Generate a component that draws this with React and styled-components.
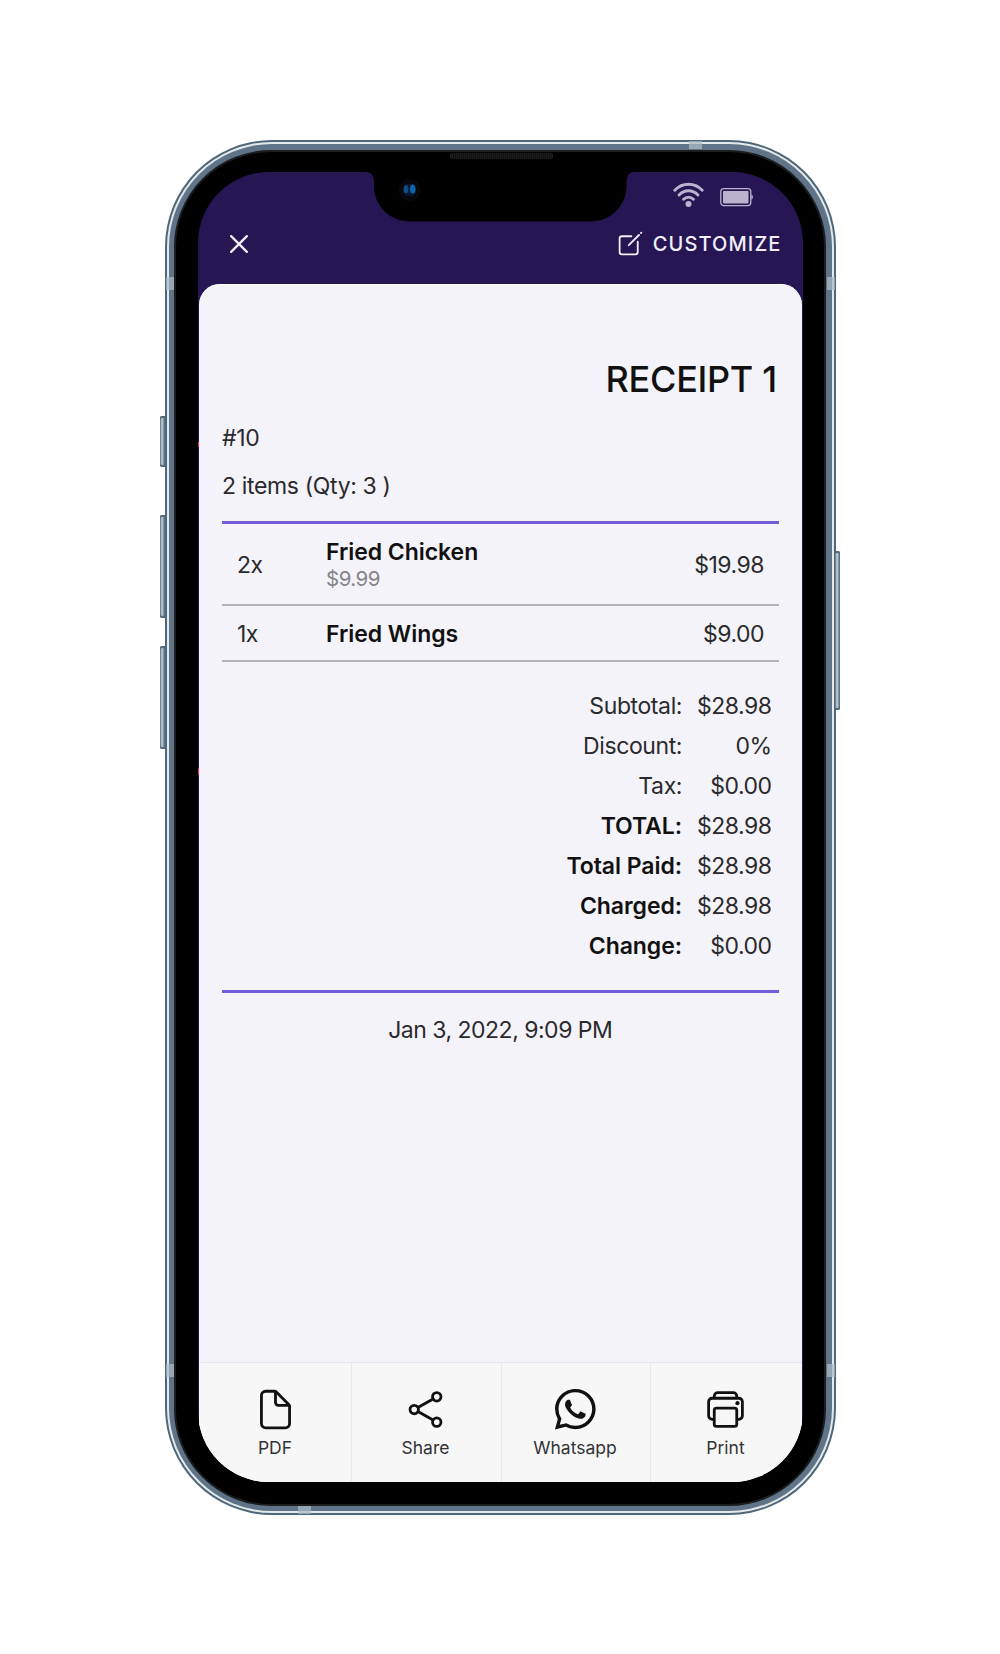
import React from "react";
import styled, { createGlobalStyle, css } from "styled-components";
import {
  IoCloseOutline,
  IoCreateOutline,
  IoDocumentOutline,
  IoShareSocialOutline,
  IoLogoWhatsapp,
  IoPrintOutline,
} from "react-icons/io5";

const Global = createGlobalStyle`
  *, *::before, *::after { box-sizing: border-box; }
  html, body { margin: 0; background: #fff; }
  body { font-family: Inter, "Liberation Sans", sans-serif; color: #2a2a2d; }
`;

const Page = styled.main`
  width: 1000px;
  height: 1654px;
  display: flex;
  justify-content: center;
  padding-top: 140px;
  background: #fff;
`;

const Phone = styled.div`
  position: relative;
  width: 671px;
  height: 1375px;
  padding: 2px;
  border-radius: 107px;
  background: #50677a;
`;

const Shine = styled.div`
  height: 100%;
  padding: 2px;
  border-radius: 105px;
  background: #e4e9ec;
`;

const Band = styled.div`
  height: 100%;
  padding: 5.5px;
  border-radius: 103px;
  background: #5f7488;
`;

const Bezel = styled.div`
  height: 100%;
  padding: 20.5px 21.5px 21.5px;
  border: 2px solid #1c1d1e;
  border-radius: 97px;
  background: #000;
`;

const Screen = styled.div`
  position: relative;
  height: 100%;
  display: flex;
  flex-direction: column;
  overflow: hidden;
  border-radius: 71px;
  background: #261754;
`;

const SideButton = styled.i`
  position: absolute;
  top: ${(p) => p.$top}px;
  height: ${(p) => p.$height}px;
  width: 5px;
  background: linear-gradient(90deg, #5d7385, #cbd4d9 40%, #8497a5 70%, #50677a);
  box-shadow: inset 0 2px 1px #50677a, inset 0 -2px 1px #50677a;
  ${(p) =>
    p.$right
      ? css`right: -4.5px; border-radius: 0 2px 2px 0;`
      : css`left: -4.5px; border-radius: 2px 0 0 2px;`}
`;

const Antenna = styled.i`
  position: absolute;
  left: ${(p) => p.$x}px;
  top: ${(p) => p.$y}px;
  width: ${(p) => (p.$flat ? 13 : 8)}px;
  height: ${(p) => (p.$flat ? 8 : 13)}px;
  background: rgba(170, 187, 197, 0.72);
`;

const EdgeMark = styled.i`
  position: absolute;
  left: 0;
  top: ${(p) => p.$top}px;
  width: 1.5px;
  height: ${(p) => p.$height}px;
  background: #f5334f;
`;

const Speaker = styled.i`
  position: absolute;
  left: 285px;
  top: 13px;
  width: 103px;
  height: 6px;
  border: 1px solid #2a2a2a;
  border-width: 0 1px;
  border-radius: 3px;
  background: repeating-linear-gradient(90deg, #111 0 1px, #1b1b1b 1px 2px);
`;

const Notch = styled.svg`
  position: absolute;
  left: 168px;
  top: 0;
`;

const StatusBar = styled.div`
  height: 48px;
  display: flex;
  justify-content: flex-end;
  padding: 10px 49.5px 0 0;
  gap: 16.5px;
`;

const TopBar = styled.header`
  height: 63.5px;
  display: flex;
  justify-content: space-between;
  padding: 5.5px 21px 0 23.5px;
  color: #f1eff7;
`;

const IconButton = styled.button`
  height: 36px;
  display: flex;
  align-items: center;
  gap: 8px;
  padding: 0;
  border: 0;
  background: none;
  color: inherit;
  font: 500 20px/36px Inter, "Liberation Sans", sans-serif;
  letter-spacing: 1.1px;
`;

const Sheet = styled.section`
  flex: 1;
  display: flex;
  flex-direction: column;
  margin: 0 1px;
  border-radius: 21px 21px 0 0;
  overflow: hidden;
  background: #f4f3f9;
  box-shadow: inset 0 1px 0 #fff;
`;

const Receipt = styled.article`
  flex: 1;
  padding: 73px 23px 0 23.5px;
  font-size: 23px;
  line-height: 28px;
  letter-spacing: -0.5px;
`;

const Title = styled.h1`
  margin: 0;
  padding-right: 1.5px;
  font-size: 36px;
  line-height: 44px;
  font-weight: 450;
  letter-spacing: -0.3px;
  text-align: right;
  color: #111;
`;

const Meta = styled.p`
  margin: ${(p) => p.$gap}px 0 0;
  letter-spacing: -0.35px;
`;

const Items = styled.ul`
  margin: 21px 0 0;
  padding: 0;
  list-style: none;
  border-top: 3px solid #745cd6;
`;

const Item = styled.li`
  height: ${(p) => p.$height}px;
  display: grid;
  grid-template-columns: 89px 1fr auto;
  align-items: center;
  padding: 0 14.5px 0 15px;
  border-bottom: 2px solid #b3b3ba;
`;

const ItemCell = styled.span`
  padding-top: 1.5px;
`;

const ItemName = styled.div`
  padding-top: ${(p) => (p.$single ? 1.5 : 0)}px;
  font-weight: 600;
  letter-spacing: -0.05px;
  color: #111;
`;

const UnitPrice = styled.div`
  font-size: 20.5px;
  line-height: 25px;
  color: #858589;
`;

const Totals = styled.dl`
  display: grid;
  grid-template-columns: 1fr auto;
  grid-auto-rows: 40.05px;
  column-gap: 15px;
  align-items: center;
  margin: 24px 0 0;
  padding: 0 7px 23.7px 0;
  text-align: right;
`;

const TotalLabel = styled.dt`
  font-weight: ${(p) => (p.$strong ? 600 : 400)};
  letter-spacing: ${(p) => (p.$strong ? -0.05 : -0.4)}px;
  color: ${(p) => (p.$strong ? "#111" : "#2a2a2d")};
`;

const TotalValue = styled.dd`
  margin: 0;
`;

const DateLine = styled.footer`
  padding-top: 22.5px;
  border-top: 3px solid #745cd6;
  text-align: center;
`;

const Actions = styled.nav`
  height: 120.5px;
  display: grid;
  grid-template-columns: 152px 150px 149px 1fr;
  border-top: 1px solid #e6e8e9;
  background: #f7f7f7;
`;

const Action = styled.button`
  display: flex;
  flex-direction: column;
  align-items: center;
  padding: 24px 1px 0 0;
  border: 0;
  border-left: 1px solid #e6e8e9;
  background: none;
  color: #111;
  &:first-child { border-left-color: transparent; padding-right: 0; }
`;

const ActionIcon = styled.span`
  width: 47px;
  height: 45px;
  display: flex;
  align-items: center;
  justify-content: center;
  svg { flex: none; }
`;

const ActionLabel = styled.span`
  margin-top: 5px;
  font: 400 17.5px/22px Inter, "Liberation Sans", sans-serif;
  color: #333335;
`;

const items = [
  { qty: "2x", name: "Fried Chicken", unit: "$9.99", price: "$19.98", height: 82 },
  { qty: "1x", name: "Fried Wings", price: "$9.00", height: 56 },
];

const totals = [
  ["Subtotal:", "$28.98"],
  ["Discount:", "0%"],
  ["Tax:", "$0.00"],
  ["TOTAL:", "$28.98", true],
  ["Total Paid:", "$28.98", true],
  ["Charged:", "$28.98", true],
  ["Change:", "$0.00", true],
];

const actions = [
  ["PDF", IoDocumentOutline, 45],
  ["Share", IoShareSocialOutline, 45],
  ["Whatsapp", IoLogoWhatsapp, 46.5],
  ["Print", IoPrintOutline, 45],
];

const antennas = [
  [524.5, 1, true],
  [133.5, 1366, true],
  [1, 137],
  [662.5, 137],
  [1, 1224],
  [662.5, 1224],
];

const Wifi = () => (
  <svg width="31" height="25" viewBox="0 0 31 25" fill="none" stroke="#b9b3ce" strokeWidth="2.9" strokeLinecap="round">
    <path d="M1.8 8.2C9.5.2 21.5.2 29.2 8.2M6.1 13C11.6 7.4 19.4 7.4 24.9 13M10.6 17.3C13.5 14.5 17.5 14.5 20.4 17.3" />
    <circle cx="15.5" cy="21.9" r="3" fill="#b9b3ce" stroke="none" />
  </svg>
);

const Battery = () => (
  <svg width="33" height="26" viewBox="0 0 33 26">
    <rect x="0.8" y="6.6" width="30" height="17" rx="3" fill="none" stroke="#b9b3ce" strokeWidth="1.3" />
    <rect x="3" y="8.9" width="25.5" height="12.5" rx="0.8" fill="#b9b3ce" />
    <path d="M31.4 12.5q1.5.3 1.5 2.6t-1.5 2.6z" fill="#b9b3ce" />
  </svg>
);

export default function App() {
  return (
    <Page>
      <Global />
      <Phone>
        <SideButton $top={275.5} $height={51} />
        <SideButton $top={375} $height={103} />
        <SideButton $top={506} $height={103} />
        <SideButton $top={411} $height={159} $right />
        <Shine>
          <Band>
            <Bezel>
              <Screen>
                <Notch width="268" height="50" viewBox="0 0 268 50">
                  <path d="M0 0Q8 .5 8 10V14C8 34 24 49.5 44 49.5H224.5C244.5 49.5 260.5 34 260.5 14V10Q260.5.5 268 0Z" fill="#000" />
                  <circle cx="43.7" cy="18" r="11" fill="#07080c" />
                  <circle cx="43.7" cy="18" r="6.6" fill="#07152f" />
                  <ellipse cx="40" cy="17.2" rx="2.4" ry="4" fill="#0c4f88" />
                  <ellipse cx="46.7" cy="17" rx="2.8" ry="4.5" fill="#0f62a5" />
                </Notch>
                <StatusBar>
                  <Wifi />
                  <Battery />
                </StatusBar>
                <TopBar>
                  <IconButton aria-label="Close">
                    <IoCloseOutline size={36} />
                  </IconButton>
                  <IconButton>
                    <IoCreateOutline size={29} />
                    CUSTOMIZE
                  </IconButton>
                </TopBar>
                <Sheet>
                  <Receipt>
                    <Title>RECEIPT 1</Title>
                    <Meta $gap={23}>#10</Meta>
                    <Meta $gap={20.5}>2 items (Qty: 3 )</Meta>
                    <Items>
                      {items.map((it) => (
                        <Item key={it.name} $height={it.height}>
                          <ItemCell>{it.qty}</ItemCell>
                          <div>
                            <ItemName $single={!it.unit}>{it.name}</ItemName>
                            {it.unit && <UnitPrice>{it.unit}</UnitPrice>}
                          </div>
                          <ItemCell>{it.price}</ItemCell>
                        </Item>
                      ))}
                    </Items>
                    <Totals>
                      {totals.map(([label, value, strong]) => (
                        <React.Fragment key={label}>
                          <TotalLabel $strong={strong}>{label}</TotalLabel>
                          <TotalValue>{value}</TotalValue>
                        </React.Fragment>
                      ))}
                    </Totals>
                    <DateLine>Jan 3, 2022, 9:09 PM</DateLine>
                  </Receipt>
                  <Actions>
                    {actions.map(([label, Icon, size]) => (
                      <Action key={label}>
                        <ActionIcon>
                          <Icon size={size} />
                        </ActionIcon>
                        <ActionLabel>{label}</ActionLabel>
                      </Action>
                    ))}
                  </Actions>
                </Sheet>
                <EdgeMark $top={270} $height={5} />
                <EdgeMark $top={596} $height={7} />
              </Screen>
            </Bezel>
          </Band>
        </Shine>
        <Speaker />
        {antennas.map(([x, y, flat], i) => (
          <Antenna key={i} $x={x} $y={y} $flat={flat} />
        ))}
      </Phone>
    </Page>
  );
}
